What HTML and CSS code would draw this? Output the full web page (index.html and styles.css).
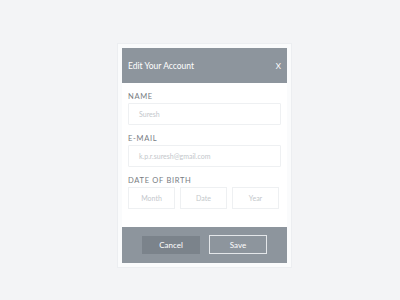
FILE: index.html
```html
<!DOCTYPE html>
<html>
<head>
<meta charset="utf-8">
<link rel="stylesheet" href="styles.css">
</head>
<body>
<div class="card">
  <div class="modal">
    <div class="header">
      <span class="title">Edit Your Account</span>
      <span class="close">X</span>
    </div>
    <div class="content">
      <div class="label">NAME</div>
      <div class="field">Suresh</div>
      <div class="label">E-MAIL</div>
      <div class="field">k.p.r.suresh@gmail.com</div>
      <div class="label">DATE OF BIRTH</div>
      <div class="dob">
        <div class="box">Month</div>
        <div class="box">Date</div>
        <div class="box">Year</div>
      </div>
    </div>
    <div class="footer">
      <div class="btn cancel">Cancel</div>
      <div class="btn save">Save</div>
    </div>
  </div>
</div>
</body>
</html>
```
FILE: styles.css
```css
html, body {
  margin: 0;
  padding: 0;
}
body {
  background: #f3f4f6;
  width: 400px;
  height: 300px;
  font-family: Lato, "Open Sans", sans-serif;
}
.card {
  margin: 43px 0 0 117px;
  width: 165px;
  padding: 4px;
  background: #fafbfc;
  border: 1px solid #eceef1;
  box-sizing: content-box;
}
.modal {
  width: 165px;
  background: #fff;
}
.header {
  height: 35px;
  background: #8d959d;
  display: flex;
  align-items: center;
  justify-content: space-between;
  padding: 0 6px 0 6px;
  color: #fff;
}
.title {
  font-size: 8.5px;
  margin-top: 1px;
}
.close {
  font-size: 8px;
}
.content {
  padding: 9px 6px 18px 6px;
}
.label {
  height: 10px;
  line-height: 10px;
  font-size: 7.5px;
  letter-spacing: 0.7px;
  color: #777c82;
  margin-bottom: 1px;
}
.field {
  height: 20px;
  border: 1px solid #eef0f2;
  border-radius: 1px;
  font-size: 7px;
  color: #c3c7cb;
  line-height: 20px;
  padding-left: 10px;
  margin-bottom: 9px;
}
.dob {
  display: grid;
  grid-template-columns: 47px 47px 47px;
  column-gap: 5px;
}
.box {
  height: 20px;
  border: 1px solid #eef0f2;
  box-sizing: content-box;
  width: 45px;
  font-size: 7px;
  color: #c3c7cb;
  line-height: 20px;
  text-align: center;
}
.footer {
  height: 36px;
  background: #8d959d;
  display: flex;
  justify-content: center;
  align-items: flex-start;
  gap: 9px;
  padding-top: 8px;
  box-sizing: border-box;
}
.btn {
  width: 58px;
  height: 19px;
  box-sizing: border-box;
  font-size: 8px;
  color: #fff;
  display: flex;
  align-items: center;
  justify-content: center;
}
.cancel {
  background: #7b838b;
  margin-top: 1px;
  height: 18px;
}
.save {
  border: 1px solid #e4e7ea;
}
```
